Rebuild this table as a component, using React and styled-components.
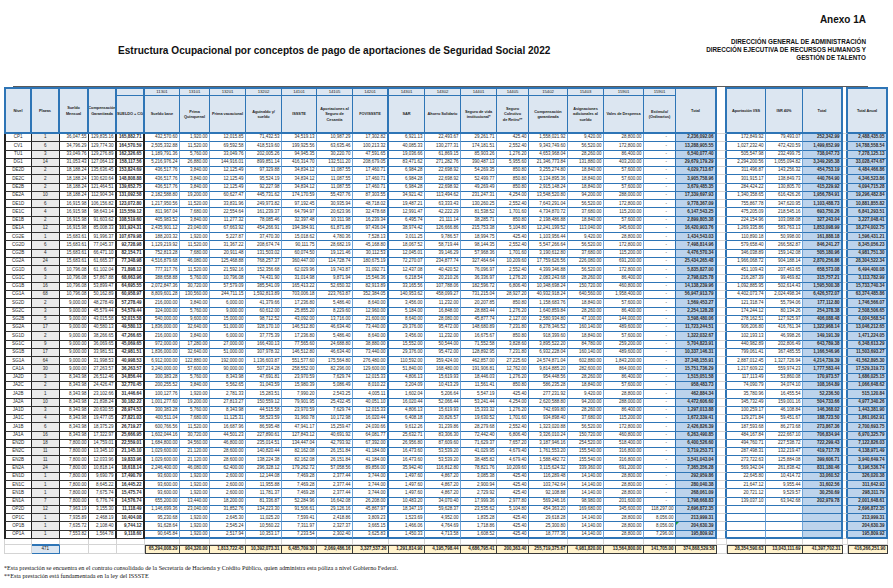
import React from 'react';
import styled, { createGlobalStyle, css } from 'styled-components';

const BLUE = '#2e75b6';
const LBLUE = '#6fa4d8';
const DARK = '#222222';
const GRID = '#d4d4d4';
const HEAD_BG = '#dce6f1';
const TOT_BG = '#bcd3ec';
const SUM_BG = '#fff2cc';
const PLZ_BG = '#ebebeb';

const W = [28, 28, 29, 28, 28, 35, 30, 36, 36, 35, 36, 36, 36, 36, 36, 32, 39, 36, 40, 32, 41, 10, 39, 37, 40, 5, 40];

const GlobalStyle = createGlobalStyle`
  html, body { margin: 0; padding: 0; background: #fff; }
  body { font-family: "Liberation Sans", Arial, sans-serif; color: #1a1a1a; }
`;

const Page = styled.div`
  width: 893px;
  height: 588px;
  overflow: hidden;
  background: #fff;
`;

const Annex = styled.div`
  padding: 14px 27px 0 0;
  height: 12px;
  line-height: 12px;
  text-align: right;
  font-size: 10px;
  font-weight: 700;
  color: #111;
`;

const TitleRow = styled.div`
  display: flex;
  align-items: flex-start;
  margin-top: 12px;
`;

const Title = styled.h1`
  flex: 1;
  margin: 0;
  padding: 8px 0 0 118px;
  font-size: 10.1px;
  line-height: 10px;
  font-weight: 700;
  color: #111;
`;

const Agency = styled.div`
  padding-right: 27px;
  text-align: right;
  font-size: 6.3px;
  line-height: 8px;
  font-weight: 700;
  color: #111;
`;

const TopRule = styled.div`
  margin: 24px 0 0 13px;
  width: 855px;
  height: 1px;
  background: #5a5a5a;
`;

const Sheet = styled.div`
  margin-left: 4px;
  width: 884px;
  display: grid;
  grid-template-columns: ${W.map((w) => w + 'px').join(' ')};
  grid-template-rows: 9px 38px repeat(49, 8.28px) 6px 8.5px;
  font-family: "Liberation Sans Narrow", "Liberation Sans", Arial, sans-serif;
  color: #2a2a2a;
`;

const HeadCell = styled.div`
  grid-column: ${(p) => p.$c};
  grid-row: ${(p) => p.$r} / span ${(p) => p.$rs || 1};
  box-sizing: border-box;
  min-width: 0;
  overflow: hidden;
  display: flex;
  align-items: center;
  justify-content: center;
  text-align: center;
  white-space: pre-line;
  padding: 0;
  background: ${HEAD_BG};
  border-top: ${(p) => (p.$r === 1 ? `2px solid ${BLUE}` : 'none')};
  border-bottom: ${(p) => (p.$r + (p.$rs || 1) - 1 === 2 ? `2px solid ${BLUE}` : `1px solid ${BLUE}`)};
  border-right: ${(p) => (p.$thick ? `2px solid ${BLUE}` : `1px solid ${BLUE}`)};
  border-left: ${(p) => (p.$edge ? `2px solid ${BLUE}` : 'none')};
  font-size: 3.9px;
  letter-spacing: -0.05px;
  line-height: 5.5px;
  font-weight: 700;
  color: #1f1f1f;
`;

const CodeCell = styled(HeadCell)`
  font-weight: 400;
  font-size: 4.3px;
`;

const HeadGap = styled.div`
  grid-column: ${(p) => p.$c};
  grid-row: 1 / span 2;
  box-sizing: border-box;
  background: #fff;
  border-right: 2px solid ${BLUE};
  border-bottom: 1px solid ${GRID};
`;

const DataCell = styled.div`
  box-sizing: border-box;
  min-width: 0;
  overflow: hidden;
  white-space: nowrap;
  position: relative;
  display: flex;
  align-items: center;
  justify-content: ${(p) => (p.$align === 'center' ? 'center' : 'flex-end')};
  padding: 0 ${(p) => (p.$pr != null ? p.$pr : 1.5)}px 0 1px;
  background: ${(p) => p.$bg || '#fff'};
  font-size: 4.5px;
  line-height: 1;
  font-weight: ${(p) => (p.$bold ? 700 : 400)};
  border-right: ${(p) => p.$right};
  border-bottom: ${(p) => p.$bottom};
  border-left: ${(p) => p.$left || 'none'};
  ${(p) =>
    p.$flag &&
    css`
      &::before {
        content: '';
        position: absolute;
        left: 0;
        top: 0;
        border-top: 3px solid #1e9e3a;
        border-right: 3px solid transparent;
      }
    `}
`;

const BlankCell = styled.div`
  box-sizing: border-box;
  background: #fff;
  border-right: 1px solid ${GRID};
  border-bottom: ${(p) => (p.$blueBottom ? `1px solid ${BLUE}` : `1px solid ${GRID}`)};
  border-left: ${(p) => (p.$edge ? `1px solid ${GRID}` : 'none')};
`;

const SumCell = styled.div`
  box-sizing: border-box;
  min-width: 0;
  overflow: hidden;
  white-space: nowrap;
  display: flex;
  align-items: center;
  justify-content: ${(p) => (p.$tone === 'count' ? 'center' : 'flex-end')};
  padding: 0 1.5px 0 1px;
  font-size: 4.5px;
  line-height: 1;
  font-weight: 700;
  color: #1a1a1a;
  ${(p) =>
    p.$tone === 'yellow'
      ? css`
          background: ${SUM_BG};
          border-top: 1px solid #3a3a3a;
          border-bottom: 1px solid #3a3a3a;
          border-right: 1px solid #3a3a3a;
          border-left: ${p.$edge ? '1px solid #3a3a3a' : 'none'};
        `
      : p.$tone === 'count'
      ? css`
          background: ${HEAD_BG};
          border: 1px solid ${BLUE};
          border-left: none;
          font-weight: 400;
        `
      : css`
          background: #fff;
          border-right: 1px solid ${GRID};
          border-bottom: 1px solid ${GRID};
          border-left: ${p.$edge ? `1px solid ${GRID}` : 'none'};
        `}
`;

const Notes = styled.div`
  margin-top: 10px;
  padding-left: 4px;
  font-family: "Liberation Serif", "Times New Roman", serif;
  font-size: 6.2px;
  line-height: 8px;
  color: #111;
`;

const ROWS = [
  ['CP1', 1, 36047.55, 129835.16],
  ['CV1', 6, 34796.29, 129774.3],
  ['TU1', 3, 33049.76, 129276.89],
  ['DG1', 14, 31053.43, 127064.13],
  ['DE2D', 2, 18188.24, 135636.45],
  ['DE2C', 2, 18188.24, 130620.64],
  ['DE2B', 2, 18188.24, 121464.51],
  ['DE2A', 10, 18188.24, 112904.34],
  ['DE1D', 6, 16915.98, 106156.82],
  ['DE1C', 4, 16915.98, 98643.14],
  ['DE1B', 2, 16915.98, 91603.62],
  ['DE1A', 12, 16915.98, 85008.33],
  ['CG2E', 1, 15683.61, 91996.37],
  ['CG2D', 6, 15683.61, 77045.37],
  ['CG2B', 4, 15683.61, 66471.1],
  ['CG2A', 24, 15683.61, 61665.37],
  ['CG1D', 6, 10796.08, 61102.04],
  ['CG1C', 3, 10796.08, 57867.88],
  ['CG1B', 16, 10796.08, 53899.47],
  ['CG1A', 68, 10796.08, 50162.89],
  ['SG2D', 2, 9000, 48278.49],
  ['SG2C', 3, 9000, 45579.44],
  ['SG2B', 5, 9000, 43015.58],
  ['SG2A', 17, 9000, 40580.13],
  ['SG1D', 2, 9000, 38266.65],
  ['SG1C', 9, 9000, 36069.65],
  ['SG1B', 17, 9000, 33981.51],
  ['SG1A', 64, 9000, 31998.53],
  ['CA1A', 30, 9000, 27263.57],
  ['JA2D', 3, 8343.98, 26512.46],
  ['JA2C', 2, 8343.98, 24426.47],
  ['JA2B', 1, 8343.98, 23102.66],
  ['JA2A', 10, 8343.98, 21838.24],
  ['JA1D', 3, 8343.98, 20630.55],
  ['JA1C', 4, 8343.98, 19477.05],
  ['JA1B', 6, 8343.98, 18375.29],
  ['JA1A', 16, 8343.98, 17322.97],
  ['EN2D', 18, 7800, 14759.01],
  ['EN2C', 11, 7800, 13345.1],
  ['EN2B', 11, 7800, 12033.96],
  ['EN2A', 24, 7800, 10818.14],
  ['EN1D', 1, 7800, 9690.79],
  ['EN1C', 1, 7800, 8645.22],
  ['EN1B', 1, 7800, 7675.74],
  ['EN1A', 7, 7800, 6776.74],
  ['OP2D', 12, 7963.19, 3155.3],
  ['OP1C', 1, 7935.89, 2468.19],
  ['OP1B', 1, 7635.72, 2108.4],
  ['OP1A', 1, 7553.82, 1564.78],
];

const STIMULUS = { OP2D: 118297, OP1C: 8056, OP1B: 8056, OP1A: 7296 };

const CONCEPTS = [
  ['11301', 'Sueldo base'],
  ['13101', 'Prima\nQuinquenal'],
  ['13201', 'Prima vacacional'],
  ['13202', 'Aguinaldo y/ sueldo'],
  ['14101', 'ISSSTE'],
  ['14105', 'Aportaciones al\nSeguro de Cesantía'],
  ['14201', 'FOVISSSTE'],
  ['14301', 'SAR'],
  ['14302', 'Ahorro Solidario'],
  ['14401', 'Seguro de vida\ninstitucional*'],
  ['14405', 'Seguro Colectivo\nde Retiro**'],
  ['15402', 'Compensación\ngarantizada'],
  ['15403', 'Asignaciones\nadicionales al sueldo'],
  ['15901', 'Vales de Despensa'],
  ['15901', 'Estímulo/\n(Ordinarios)'],
];

const TOTALS = [
  '65,294,008.29', '904,320.00', '1,813,722.45', '10,392,073.31', '6,485,709.30', '2,069,486.16',
  '3,327,537.26', '1,291,814.90', '4,195,798.44', '4,686,795.41', '200,363.40', '255,719,375.67',
  '4,981,820.00', '13,564,800.00', '141,705.00', '374,868,529.58',
];
const TOTALS_RIGHT = ['28,354,590.63', '13,043,111.69', '41,397,702.31'];
const TOTAL_ANNUAL = '416,266,251.90';

const fmt = (n) => n.toLocaleString('en-US', { minimumFractionDigits: 2, maximumFractionDigits: 2 });

function rightBorder(i) {
  if (i <= 2) return `1px solid ${DARK}`;
  if (i === 3 || i === 4) return `2px solid ${DARK}`;
  if (i === 11) return `2px solid ${BLUE}`;
  if (i === 19 || i === 15) return `1px solid ${BLUE}`;
  if (i === 20 || i === 21 || i === 24 || i === 25 || i === 26) return `2px solid ${BLUE}`;
  return `1px solid ${LBLUE}`;
}

function bottomBorder(i, last) {
  if (i <= 4) return `1px solid #333`;
  if (i === 21 || i === 25) return `1px solid ${GRID}`;
  return last ? `2px solid ${BLUE}` : `1px solid ${BLUE}`;
}

function buildRow([nivel, plazas, sm, cg]) {
  const scg = sm + cg;
  const base = sm * 12 * plazas;
  const lower = nivel.startsWith('EN') || nivel.startsWith('OP');
  const vals = [
    base,
    1920 * plazas,
    (sm / 3) * plazas,
    (sm * 1.3333 + cg * 0.18) * plazas,
    base * 0.0798,
    base * 0.0254,
    base * 0.04,
    base * 0.016,
    base * 0.052,
    scg * 0.1764 * plazas,
    425.4 * plazas,
    cg * 12 * plazas,
    (lower ? 14140 : 9420) * plazas,
    28800 * plazas,
    STIMULUS[nivel] || 0,
  ];
  const total = vals.reduce((a, b) => a + b, 0);
  const op = nivel.startsWith('OP');
  const aport = op ? null : total * 0.0773;
  const isr = op ? null : total * 0.03555;
  const total2 = op ? null : aport + isr;
  const annual = total + (total2 || 0);
  return { nivel, plazas, sm, cg, scg, vals, total, aport, isr, total2, annual };
}

const DATA = ROWS.map(buildRow);

function Header() {
  const left = ['Nivel', 'Plazas', 'Sueldo Mensual', 'Compensación\nGarantizada'];
  return (
    <>
      {left.map((t, i) => (
        <HeadCell key={'l' + i} $c={i + 1} $r={1} $rs={2} $thick $edge={i === 0}>
          {t}
        </HeadCell>
      ))}
      <CodeCell $c={5} $r={1} $thick />
      <HeadCell $c={5} $r={2} $thick>
        SUELDO + CG
      </HeadCell>
      {CONCEPTS.map(([code, label], k) => (
        <React.Fragment key={'c' + k}>
          <CodeCell $c={6 + k} $r={1} $thick={k === 6}>
            {code}
          </CodeCell>
          <HeadCell $c={6 + k} $r={2} $thick={k === 6}>
            {label}
          </HeadCell>
        </React.Fragment>
      ))}
      <HeadCell $c={21} $r={1} $rs={2} $thick>
        Total
      </HeadCell>
      <HeadGap $c={22} />
      <HeadCell $c={23} $r={1} $rs={2}>
        Aportación I/SS
      </HeadCell>
      <HeadCell $c={24} $r={1} $rs={2}>
        ISR 40%
      </HeadCell>
      <HeadCell $c={25} $r={1} $rs={2} $thick>
        Total
      </HeadCell>
      <HeadGap $c={26} />
      <HeadCell $c={27} $r={1} $rs={2} $thick>
        Total Anual
      </HeadCell>
    </>
  );
}

function DataRow({ row, index, last }) {
  const cells = [];
  const push = (i, content, extra = {}) =>
    cells.push(
      <DataCell
        key={i}
        $right={rightBorder(i)}
        $bottom={bottomBorder(i, last)}
        $left={i === 0 ? `2px solid ${DARK}` : undefined}
        {...extra}
      >
        {content}
      </DataCell>
    );
  push(0, row.nivel, { $align: 'center' });
  push(1, row.plazas, { $align: 'center', $bg: PLZ_BG });
  push(2, fmt(row.sm));
  push(3, fmt(row.cg));
  push(4, fmt(row.scg), { $bold: true });
  row.vals.forEach((v, k) => {
    const i = 5 + k;
    if (k === 14 && !v) push(i, '-', { $pr: 8 });
    else push(i, fmt(v));
  });
  push(20, fmt(row.total), { $bold: true, $bg: TOT_BG, $flag: index === 47 });
  push(21, '');
  push(22, row.aport == null ? '' : fmt(row.aport));
  push(23, row.isr == null ? '' : fmt(row.isr));
  push(24, row.total2 == null ? '' : fmt(row.total2), { $bold: true, $bg: TOT_BG });
  push(25, '');
  push(26, fmt(row.annual), { $bold: true, $bg: TOT_BG });
  return cells;
}

function BlankRow() {
  return W.map((_, i) => <BlankCell key={'b' + i} $edge={i === 0} $blueBottom={i === 1} />);
}

function SumRow() {
  const cells = [];
  cells.push(<SumCell key="s0" $tone="plain" $edge />);
  cells.push(
    <SumCell key="s1" $tone="count">
      471
    </SumCell>
  );
  for (let i = 2; i <= 4; i++) cells.push(<SumCell key={'s' + i} $tone="plain" />);
  TOTALS.forEach((t, k) =>
    cells.push(
      <SumCell key={'t' + k} $tone="yellow" $edge={k === 0}>
        {t}
      </SumCell>
    )
  );
  cells.push(<SumCell key="g1" $tone="plain" />);
  TOTALS_RIGHT.forEach((t, k) =>
    cells.push(
      <SumCell key={'r' + k} $tone="yellow" $edge={k === 0}>
        {t}
      </SumCell>
    )
  );
  cells.push(<SumCell key="g2" $tone="plain" />);
  cells.push(
    <SumCell key="ta" $tone="yellow" $edge>
      {TOTAL_ANNUAL}
    </SumCell>
  );
  return cells;
}

export default function App() {
  return (
    <>
      <GlobalStyle />
      <Page>
        <Annex>Anexo 1A</Annex>
        <TitleRow>
          <Title>Estructura Ocupacional por conceptos de pago de aportaciones de Seguridad Social 2022</Title>
          <Agency>
            <div>DIRECCIÓN GENERAL DE ADMINISTRACIÓN</div>
            <div>DIRECCIÓN EJECUTIVA DE RECURSOS HUMANOS Y</div>
            <div>GESTIÓN DE TALENTO</div>
          </Agency>
        </TitleRow>
        <TopRule />
        <Sheet>
          <Header />
          {DATA.map((row, idx) => (
            <DataRow key={row.nivel} row={row} index={idx} last={idx === DATA.length - 1} />
          ))}
          <BlankRow />
          <SumRow />
        </Sheet>
        <Notes>
          <div>*Esta prestación se encuentra en el contrato consolidado de la Secretaría de Hacienda y Crédito Público, quien administra esta póliza a nivel Gobierno Federal.</div>
          <div>**Esta prestación está fundamentada en la ley del ISSSTE</div>
        </Notes>
      </Page>
    </>
  );
}
